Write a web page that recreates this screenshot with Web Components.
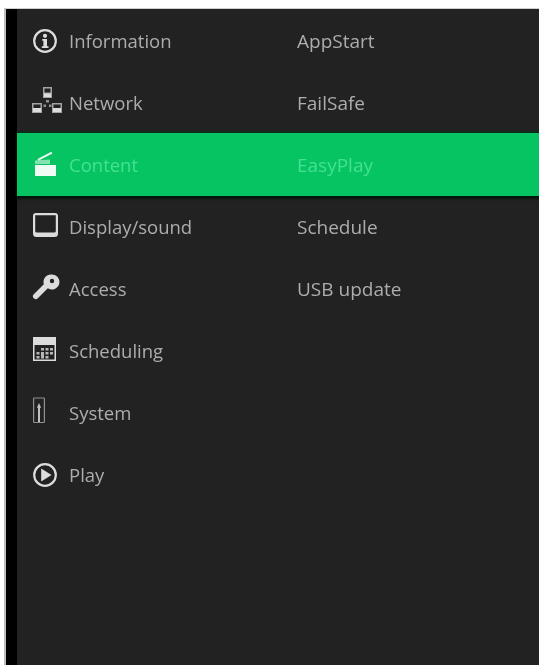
<!DOCTYPE html>
<html>
<head>
<meta charset="utf-8">
<title>Settings menu</title>
<style>
  html, body { margin: 0; height: 100%; background: #fff; overflow: hidden; }
  body { font-family: "Open Sans", "Liberation Sans", sans-serif; }
</style>
</head>
<body>
<settings-panel>
  <menu-row icon="info" label="Information" sub="AppStart"></menu-row>
  <menu-row icon="network" label="Network" sub="FailSafe"></menu-row>
  <menu-row icon="clapper" label="Content" sub="EasyPlay" active></menu-row>
  <menu-row icon="display" label="Display/sound" sub="Schedule"></menu-row>
  <menu-row icon="key" label="Access" sub="USB update"></menu-row>
  <menu-row icon="calendar" label="Scheduling"></menu-row>
  <menu-row icon="system" label="System"></menu-row>
  <menu-row icon="play" label="Play"></menu-row>
</settings-panel>

<script>
// icons are drawn on a 24 unit box, some of them run over its edge on purpose
const ICONS = {
  info: `<circle cx="12" cy="12" r="10.800" fill="none" stroke="currentColor" stroke-width="2.200"/>
    <circle cx="12" cy="6.800" r="2.100" fill="currentColor"/>
    <path d="M9.200 10h4.800v7.200h1.500V19H8.800v-1.800h1.600v-5.400H9.200z" fill="currentColor"/>`,
  network: `<g fill="currentColor">
      <path d="M10 -4h9v11h-9z M11.500 -2.500v4h6v-4z" fill-rule="evenodd" opacity=".7"/>
      <path d="M11 2.500h7v3.500h-7z"/>
      <path d="M-1 12h10v10h-10z M.5 13.500v3.500h7v-3.500z" fill-rule="evenodd" opacity=".7"/>
      <path d="M0 17h8v4H0z"/>
      <path d="M19 12h10v10h-10z M20.500 13.500v3.500h7v-3.500z" fill-rule="evenodd" opacity=".7"/>
      <path d="M20 17h8v4h-8z"/>
      <path d="M13 9h3v2.500h-3zM10.500 13.500h2.500v2.500h-2.500zM16 13.500h2.500v2.500h-2.500z" opacity=".6"/>
    </g>`,
  clapper: `<path d="M2 12h21v11H2z" fill="currentColor"/>
    <path d="M2 7.500 17 6.500v4.500H2z" fill="currentColor" opacity=".55"/>
    <path d="M4.500 6 18.500 -1.200l.9 1.700L5.400 7.700z" fill="currentColor"/>`,
  display: `<path d="M3 -2h19a3 3 0 0 1 3 3v17.500a3.500 3.500 0 0 1-3.500 3.500h-18A3.500 3.500 0 0 1 0 18.500V1a3 3 0 0 1 3-3z
      M2.200 .2v15.800q0 1.500 1.500 1.500h17.600q1.500 0 1.500-1.500V.2z" fill="currentColor" fill-rule="evenodd"/>`,
  key: `<path d="M18 -2.500a7.500 7.500 0 0 0-7.200 9.700L.8 17.200a2.800 2.800 0 0 0 0 4 2.800 2.800 0 0 0 4 0l10-10A7.500 7.500 0 1 0 18 -2.500z
      M19 1.800a2.200 2.200 0 1 1 0 4.400 2.200 2.200 0 0 1 0-4.400z" fill="currentColor" fill-rule="evenodd"/>`,
  calendar: `<path d="M0 -2h23v24H0z M1.500 6v14.500h20V6z" fill="currentColor" fill-rule="evenodd"/>
    <path d="M3.500 13h3v2.500h-3zM3.500 17h3v2.500h-3zM8 9h3v2.500H8zM8 13h3v6.500H8zM12.500 9h3v2.500h-3zM12.500 13h3v2.500h-3zM12.500 17h3v2.500h-3zM17 9h3v2.500h-3zM17 13h3v2.500h-3z" fill="currentColor" opacity=".8"/>`,
  system: `<rect x=".6" y="-3" width="10.800" height="24.500" rx=".8" fill="none" stroke="currentColor" stroke-width="1.200" opacity=".6"/>
    <path d="M6 2l2 4.500-1 .5v14H5V7l-1-.5z" fill="currentColor" opacity=".85"/>`,
  play: `<circle cx="12" cy="12" r="10.800" fill="none" stroke="currentColor" stroke-width="2.200"/>
    <path d="M8.200 5.500 18.500 12 8.200 18.500z" fill="currentColor"/>`
};

class MenuRow extends HTMLElement {
  constructor() {
    super();
    this.attachShadow({ mode: "open" });
  }

  connectedCallback() {
    const icon = ICONS[this.getAttribute("icon")] || "";
    const label = this.getAttribute("label") || "";
    const sub = this.getAttribute("sub") || "";

    this.shadowRoot.innerHTML = `
      <style>
        :host {
          display: grid;
          grid-template-columns: 52px 228px 1fr;
          align-items: center;
          height: 62px;
          color: #adadad;
          font-size: 18.5px;
        }
        :host([active]) {
          background: #06c462;
          color: #45e093;
          box-shadow: 0 3px 2px #03160c, 0 -2px 1px #0e2b1b;
          position: relative;
          height: 63px;
          margin-top: -1px;
        }
        svg {
          width: 24px;
          height: 24px;
          margin-left: 16px;
          display: block;
          overflow: visible;
          color: #dcdcdc;
        }
        :host([active]) svg { color: #effcf5; }
        span { white-space: nowrap; margin-bottom: 2px; }
        .sub { font-size: 19px; margin-bottom: 0; }
        :host([active]) span { margin-bottom: 0; }
      </style>
      <svg viewBox="0 0 24 24" aria-hidden="true">${icon}</svg>
      <span>${label}</span>
      <span class="sub">${sub}</span>
    `;
  }
}

class SettingsPanel extends HTMLElement {
  constructor() {
    super();
    this.attachShadow({ mode: "open" });
    this.shadowRoot.innerHTML = `
      <style>
        :host {
          display: block;
          box-sizing: border-box;
          height: 665px;
          padding: 8px 0 0 4px;
        }
        .edge {
          height: 100%;
          box-sizing: border-box;
          border-left: 2px solid #bdbdbd;
          border-top: 1px solid #d0d0d0;
          background: #000;
          padding-left: 11px;
        }
        .list {
          height: 100%;
          background: #222222;
          padding-top: 1px;
          display: flex;
          flex-direction: column;
          filter: blur(.5px);
        }
      </style>
      <div class="edge"><div class="list"><slot></slot></div></div>
    `;
  }
}

customElements.define("menu-row", MenuRow);
customElements.define("settings-panel", SettingsPanel);
</script>
</body>
</html>
